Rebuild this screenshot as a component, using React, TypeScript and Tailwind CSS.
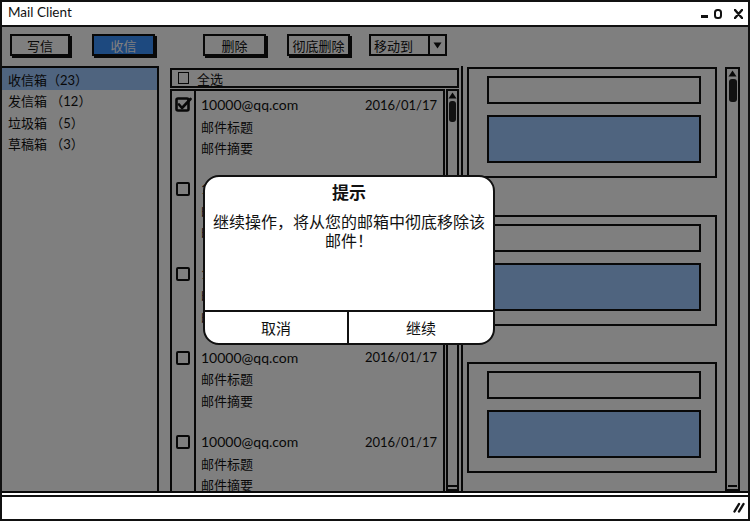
import React from "react";

const folders = [
  { name: "收信箱（23）", sel: true },
  { name: "发信箱 （12）", sel: false },
  { name: "垃圾箱 （5）", sel: false },
  { name: "草稿箱 （3）", sel: false },
];

const mails = [0, 1, 2, 3, 4];

function UpArrow() {
  return (
    <svg width="9" height="7" viewBox="0 0 9 7" className="block">
      <path d="M4.5 0.5 L8.5 6.5 L0.5 6.5 Z" fill="#111" />
    </svg>
  );
}

function DownArrow() {
  return (
    <svg width="9" height="7" viewBox="0 0 9 7" className="block">
      <path d="M0.5 0.5 L8.5 0.5 L4.5 6.5 Z" fill="#111" />
    </svg>
  );
}

function CheckedBox() {
  return (
    <svg width="17" height="15" viewBox="0 0 17 15" className="block">
      <rect x="1.5" y="1.5" width="12" height="12" rx="1.5" fill="none" stroke="#111" strokeWidth="2.6" />
      <path d="M4 7.5 L7 11 L15.5 2" fill="none" stroke="#111" strokeWidth="2.6" strokeLinecap="round" strokeLinejoin="round" />
    </svg>
  );
}

function Card({ mt }: { mt: string }) {
  return (
    <div className={`${mt} w-[250px] h-[111px] border-2 border-[#111] pt-[7px] pl-[18px] flex flex-col shrink-0`}>
      <div className="w-[214px] h-[28px] border-2 border-[#111] bg-white" />
      <div className="w-[214px] h-[48px] mt-[11px] border-2 border-[#111] bg-[#9ec8ff]" />
    </div>
  );
}

function ToolButton({ label, primary, width, ml }: { label: string; primary?: boolean; width: string; ml: string }) {
  return (
    <div
      className={`${width} ${ml} h-[22px] border-2 border-[#111] shadow-[2px_2px_0_0_#111] flex items-center justify-center pt-[2px] text-[13px] leading-none ${
        primary ? "bg-[#3a92ff] text-white" : "bg-white text-[#111]"
      }`}
    >
      {label}
    </div>
  );
}

export default function App() {
  return (
    <div className="relative w-[750px] h-[521px] border-2 border-[#111] bg-white overflow-hidden text-[#111] font-[Lato,'Noto_Sans_CJK_SC',sans-serif]">
      {/* Title bar */}
      <div className="h-[25px] border-b-2 border-[#111] flex items-center pl-[6px] pr-[5px] pb-[1px]">
        <span className="text-[13.5px] leading-none">Mail Client</span>
        <div className="ml-auto flex items-end h-[10px] mt-[2px]">
          <div className="w-[7px] h-[3px] bg-[#111] mb-[1px]" />
          <svg width="8" height="10" viewBox="0 0 8 10" className="block ml-[6px]">
            <rect x="1" y="1" width="6" height="8" rx="2.5" fill="none" stroke="#111" strokeWidth="2" />
          </svg>
          <svg width="9" height="10" viewBox="0 0 9 10" className="block ml-[12px]">
            <path d="M1 1 L8 9 M8 1 L1 9" stroke="#111" strokeWidth="2.4" strokeLinecap="round" />
          </svg>
        </div>
      </div>

      {/* Body */}
      <div className="relative h-[466px] flex flex-col bg-white">
        {/* Toolbar */}
        <div className="h-[39px] flex items-start pt-[7px] pl-[8px] shrink-0">
          <ToolButton label="写信" width="w-[60px]" ml="ml-0" />
          <ToolButton label="收信" primary width="w-[63px]" ml="ml-[22px]" />
          <ToolButton label="删除" width="w-[63px]" ml="ml-[48px]" />
          <ToolButton label="彻底删除" width="w-[63px]" ml="ml-[21px]" />
          <div className="ml-[19px] w-[78px] h-[22px] border-2 border-[#111] bg-white flex">
            <div className="flex-1 flex items-center pl-[3px] pt-[2px] text-[13px] leading-none">移动到</div>
            <div className="w-[17px] border-l-2 border-[#111] flex items-center justify-center">
              <DownArrow />
            </div>
          </div>
        </div>

        {/* Panels */}
        <div className="flex h-[427px] border-b-2 border-[#111] shrink-0">
          {/* Folders */}
          <div className="w-[157px] border-t-2 border-r-2 border-[#111] flex flex-col shrink-0">
            {folders.map((f) => (
              <div
                key={f.name}
                className={`h-[21.5px] flex items-center pl-[6px] pt-[3px] text-[13px] leading-none ${f.sel ? "bg-[#9ec8ff]" : ""}`}
              >
                {f.name}
              </div>
            ))}
          </div>

          {/* Mail list column */}
          <div className="ml-[11px] w-[289px] flex flex-col shrink-0">
            <div className="mt-[2px] h-[20px] border-2 border-[#111] flex items-center pl-[6px] shrink-0">
              <div className="w-[11px] h-[12px] border-[1.5px] border-[#111] bg-white" />
              <span className="ml-[8px] pt-[3px] text-[13px] leading-none">全选</span>
            </div>
            <div className="mt-[1px] flex flex-1 min-h-0">
              <div className="w-[26px] border-x-2 border-t-2 border-[#111] flex flex-col pl-[3px] overflow-hidden shrink-0">
                {mails.map((m) => (
                  <div key={m} className="h-[84.3px] shrink-0">
                    {m === 0 ? (
                      <div className="mt-[6px]">
                        <CheckedBox />
                      </div>
                    ) : (
                      <div className="mt-[7px] ml-[1px] w-[14px] h-[14px] border-2 border-[#111] rounded-[2px] bg-white" />
                    )}
                  </div>
                ))}
              </div>
              <div className="w-[249px] border-r-2 border-t-2 border-[#111] pl-[5px] pr-[6px] flex flex-col overflow-hidden shrink-0">
                {mails.map((m) => (
                  <div key={m} className="h-[84.3px] shrink-0 flex flex-col pt-[3px]">
                    <div className="h-[22px] flex items-center justify-between">
                      <span className="text-[14px] leading-none">10000@qq.com</span>
                      <span className="text-[13px] leading-none">2016/01/17</span>
                    </div>
                    <div className="h-[22px] flex items-center text-[13px] leading-none">邮件标题</div>
                    <div className="h-[21px] flex items-center text-[13px] leading-none">邮件摘要</div>
                  </div>
                ))}
              </div>
              <div className="ml-[1px] w-[13px] border-2 border-[#111] flex flex-col items-center pt-[1px] shrink-0">
                <UpArrow />
                <div className="mt-[2px] w-[7px] h-[21px] rounded-[3px] bg-[#222]" />
                <div className="mt-auto mb-[1px] w-[9px] h-[3px] border-t-2 border-[#111]" />
              </div>
            </div>
          </div>

          {/* Detail column */}
          <div className="ml-[2px] w-[262px] border-l-2 border-[#111] pl-[4px] pt-[1px] flex flex-col overflow-hidden shrink-0">
            <Card mt="mt-0" />
            <Card mt="mt-[37px]" />
            <Card mt="mt-[36px]" />
          </div>
          <div className="ml-[2px] mt-[1px] w-[15px] border-2 border-[#111] flex flex-col items-center pt-[1px] shrink-0">
            <UpArrow />
            <div className="mt-[2px] w-[8px] h-[23px] rounded-[3px] bg-[#222]" />
            <div className="mt-auto mb-[1px] w-[9px] h-[3px] border-t-2 border-[#111]" />
          </div>
        </div>

        {/* Dim overlay */}
        <div className="absolute inset-0 bg-black/50" />
      </div>

      {/* Status bar */}
      <div className="mt-[2px] h-[22px] border-t-2 border-[#111] bg-white flex items-center justify-end pr-[3px]">
        <svg width="12" height="11" viewBox="0 0 12 11" className="block">
          <path d="M1.5 9.5 L6 2 M6 9.5 L10.5 2" stroke="#111" strokeWidth="2.4" strokeLinecap="round" />
        </svg>
      </div>

      {/* Modal dialog */}
      <div className="absolute left-[201px] top-[173px] w-[292px] h-[170px] border-2 border-[#111] rounded-[16px] bg-white flex flex-col overflow-hidden">
        <div className="pt-[5px] h-[27px] text-center text-[17px] font-bold leading-[22px]">提示</div>
        <div className="mt-[8px] px-[7px] text-center text-[16px] leading-[19px]">
          继续操作，将从您的邮箱中彻底移除该邮件！
        </div>
        <div className="mt-auto h-[33px] border-t-2 border-[#111] flex">
          <div className="w-1/2 border-r-2 border-[#111] flex items-center justify-center pt-[1px] text-[15px] leading-none">
            取消
          </div>
          <div className="flex-1 flex items-center justify-center pt-[1px] text-[15px] leading-none">继续</div>
        </div>
      </div>
    </div>
  );
}
